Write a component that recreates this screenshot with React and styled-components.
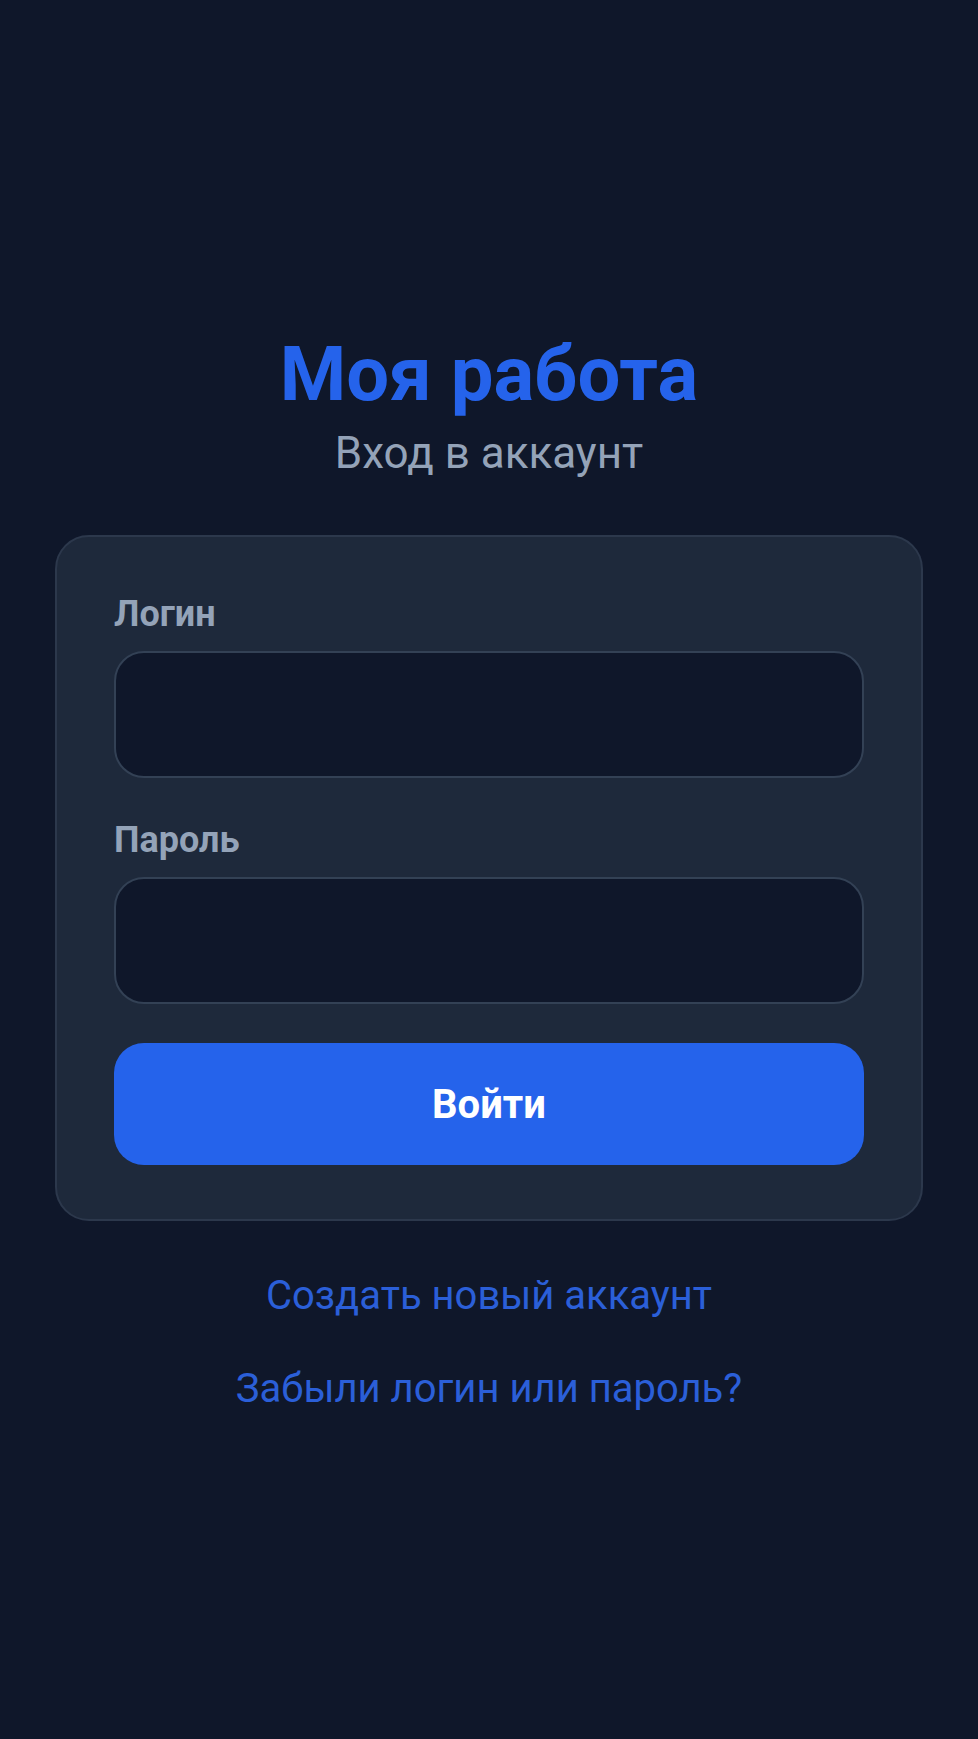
import styled, { createGlobalStyle } from 'styled-components';

const GlobalStyle = createGlobalStyle`
  html, body {
    margin: 0;
    padding: 0;
    background: #0f172a;
  }
  body {
    font-family: Roboto, "Noto Sans", "Liberation Sans", sans-serif;
    -webkit-font-smoothing: antialiased;
  }
  * { box-sizing: border-box; }
`;

const Screen = styled.div`
  min-height: 100vh;
  display: flex;
  flex-direction: column;
  align-items: center;
  padding: 329px 55px 60px;
  background: #0f172a;
`;

const Header = styled.header`
  display: flex;
  flex-direction: column;
  align-items: center;
  gap: 8px;
  margin-bottom: 56px;
`;

const Title = styled.h1`
  margin: 0;
  font-size: 76px;
  line-height: 90px;
  font-weight: 700;
  color: #2563eb;
`;

const Subtitle = styled.p`
  margin: 0;
  font-size: 44px;
  line-height: 52px;
  font-weight: 400;
  color: #94a3b8;
`;

const Card = styled.form`
  width: 100%;
  display: flex;
  flex-direction: column;
  padding: 55px 57px 54px;
  background: #1e293b;
  border: 2px solid #2c384c;
  border-radius: 34px;
`;

const Field = styled.label`
  display: flex;
  flex-direction: column;
  gap: 15px;
  margin-bottom: ${p => p.last ? '39px' : '40px'};
`;

const Label = styled.span`
  font-size: 36px;
  line-height: 44px;
  font-weight: 700;
  color: #94a3b8;
`;

const Input = styled.input`
  height: 127px;
  width: 100%;
  padding: 0 32px;
  background: #0f172a;
  border: 2px solid #334155;
  border-radius: 30px;
  color: #e2e8f0;
  font: inherit;
  font-size: 40px;
  outline: none;
`;

const SubmitButton = styled.button`
  height: 122px;
  width: 100%;
  border: none;
  border-radius: 30px;
  background: #2563eb;
  color: #ffffff;
  font-family: inherit;
  font-size: 40px;
  font-weight: 700;
  cursor: pointer;
`;

const Links = styled.nav`
  display: flex;
  flex-direction: column;
  align-items: center;
  gap: 45px;
  margin-top: 51px;
`;

const TextLink = styled.a`
  font-size: 40px;
  line-height: 48px;
  color: #2b5fd8;
  text-decoration: none;
  cursor: pointer;
`;

export default function App() {
  return (
    <>
      <GlobalStyle />
      <Screen>
        <Header>
          <Title>Моя работа</Title>
          <Subtitle>Вход в аккаунт</Subtitle>
        </Header>
        <Card onSubmit={e => e.preventDefault()}>
          <Field>
            <Label>Логин</Label>
            <Input type="text" />
          </Field>
          <Field last>
            <Label>Пароль</Label>
            <Input type="password" />
          </Field>
          <SubmitButton type="submit">Войти</SubmitButton>
        </Card>
        <Links>
          <TextLink>Создать новый аккаунт</TextLink>
          <TextLink>Забыли логин или пароль?</TextLink>
        </Links>
      </Screen>
    </>
  );
}
